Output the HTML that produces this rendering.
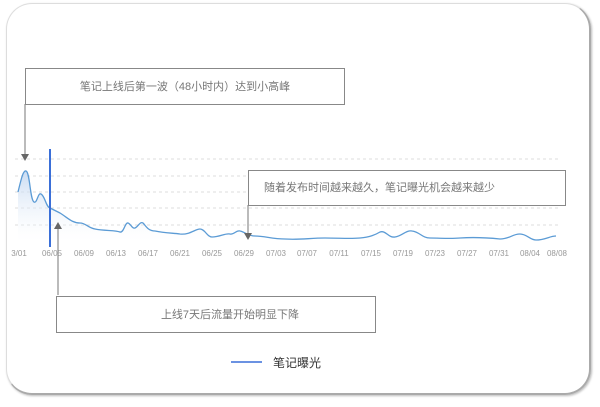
<!DOCTYPE html>
<html><head><meta charset="utf-8"><style>
body{margin:0;width:600px;height:407px;background:#fff;overflow:hidden;font-family:"Liberation Sans","Noto Sans CJK SC",sans-serif}
.card{position:absolute;left:6px;top:3px;width:582px;height:389px;border-radius:26px;border:1px solid #ddd;border-right:2px solid #aaa;border-bottom:2px solid #aaa;box-shadow:1px 1px 2px #bbb}
.box{position:absolute;border:1px solid #888;background:#fff;color:#777;font-size:11px;box-sizing:border-box}
</style></head><body>
<div class="card"></div>
<svg width="600" height="407" style="position:absolute;left:0;top:0">
<defs><linearGradient id="g" x1="0" y1="0" x2="0" y2="1"><stop offset="0" stop-color="#bcd3ef"/><stop offset="1" stop-color="#fff" stop-opacity="0.2"/></linearGradient></defs>
<g stroke="#ddd" stroke-dasharray="3,3" stroke-width="1">
<line x1="15" y1="159" x2="560" y2="159"/><line x1="15" y1="176" x2="560" y2="176"/><line x1="15" y1="192" x2="560" y2="192"/><line x1="15" y1="208" x2="560" y2="208"/><line x1="15" y1="225" x2="560" y2="225"/>
</g>
<path d="M18,192 C21,180 23,170 26,171 C30,172 30,200 34,202 C37,204 38,192 41,194 C45,196 46,207 50,208 C54,210 56,211 60,213 C68,218 72,223 80,223 C86,223 88,228 95,229 C105,231 115,230 120,232 C124,233 125,222 128,223 C131,224 132,229 135,228 C138,227 140,221 143,223 C146,226 148,231 155,231 C165,233 172,233 180,234 C190,235 195,229 200,229 C205,229 207,237 212,237 C220,237 225,233 230,234 C234,235 236,230 240,231 C245,232 248,236 255,236 C265,236 272,239 285,239 C300,240 310,238 325,238 C340,238 350,239 360,238 C370,237 375,235 380,232 C386,230 388,238 395,237 C402,236 406,230 412,231 C420,232 422,238 430,238 C440,238 450,239 460,238 C475,237 490,238 500,239 C510,239 512,234 520,234 C527,234 530,240 536,240 C545,240 550,236 556,236 L556,242 L18,242 Z" fill="url(#g)" stroke="none" opacity="0.8"/>
<path d="M18,192 C21,180 23,170 26,171 C30,172 30,200 34,202 C37,204 38,192 41,194 C45,196 46,207 50,208 C54,210 56,211 60,213 C68,218 72,223 80,223 C86,223 88,228 95,229 C105,231 115,230 120,232 C124,233 125,222 128,223 C131,224 132,229 135,228 C138,227 140,221 143,223 C146,226 148,231 155,231 C165,233 172,233 180,234 C190,235 195,229 200,229 C205,229 207,237 212,237 C220,237 225,233 230,234 C234,235 236,230 240,231 C245,232 248,236 255,236 C265,236 272,239 285,239 C300,240 310,238 325,238 C340,238 350,239 360,238 C370,237 375,235 380,232 C386,230 388,238 395,237 C402,236 406,230 412,231 C420,232 422,238 430,238 C440,238 450,239 460,238 C475,237 490,238 500,239 C510,239 512,234 520,234 C527,234 530,240 536,240 C545,240 550,236 556,236" fill="none" stroke="#5b9bd5" stroke-width="1.3"/>
<line x1="50" y1="149" x2="50" y2="247" stroke="#3a6fd8" stroke-width="2"/>
<line x1="25" y1="104" x2="25" y2="155" stroke="#777"/><path d="M21,154 L29,154 L25,161 Z" fill="#666"/>
<line x1="248" y1="205" x2="248" y2="234" stroke="#777"/><path d="M244,233 L252,233 L248,240 Z" fill="#666"/>
<line x1="58" y1="228" x2="58" y2="295" stroke="#777"/><path d="M54,229 L62,229 L58,222 Z" fill="#666"/>
<g font-size="8" fill="#999" text-anchor="middle" font-family="Liberation Sans,sans-serif">
<text x="19" y="256">3/01</text><text x="52" y="256">06/05</text><text x="84" y="256">06/09</text><text x="116" y="256">06/13</text><text x="148" y="256">06/17</text><text x="180" y="256">06/21</text><text x="212" y="256">06/25</text><text x="244" y="256">06/29</text><text x="276" y="256">07/03</text><text x="307" y="256">07/07</text><text x="339" y="256">07/11</text><text x="371" y="256">07/15</text><text x="403" y="256">07/19</text><text x="435" y="256">07/23</text><text x="467" y="256">07/27</text><text x="499" y="256">07/31</text><text x="530" y="256">08/04</text><text x="557" y="256">08/08</text>
</g>
<line x1="231" y1="362" x2="262" y2="362" stroke="#3a6fd8" stroke-width="1.5"/>
<text x="273" y="367" font-size="12" fill="#333">笔记曝光</text>
</svg>
<div class="box" style="left:25px;top:68px;width:320px;height:37px;text-align:center;line-height:36px">笔记上线后第一波（48小时内）达到小高峰</div>
<div class="box" style="left:248px;top:170px;width:318px;height:36px;padding-left:15px;line-height:35px">随着发布时间越来越久，笔记曝光机会越来越少</div>
<div class="box" style="left:56px;top:296px;width:320px;height:37px;text-align:center;line-height:36px;padding-left:28px">上线7天后流量开始明显下降</div>
</body></html>
